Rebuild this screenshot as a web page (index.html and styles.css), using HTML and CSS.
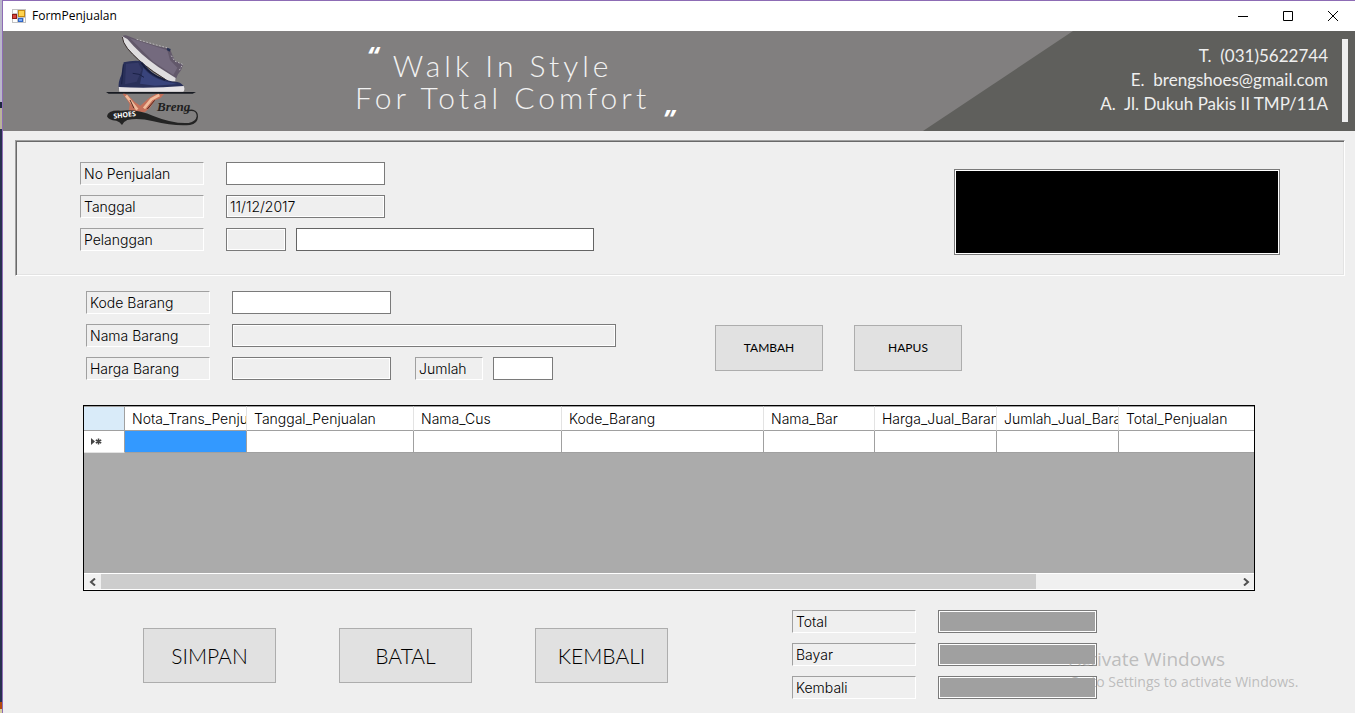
FILE: index.html
```html
<!DOCTYPE html>
<html lang="id">
<head>
<meta charset="utf-8">
<title>FormPenjualan</title>
<link rel="stylesheet" href="styles.css">
</head>
<body>
<div class="desktop-edge"></div>
<div class="window">
  <header class="titlebar">
    <svg class="app-icon" viewBox="0 0 14 14" aria-hidden="true">
      <rect width="14" height="14" fill="#c3c3c3"/>
      <path d="M1 1h4v3H1zM1 10h4v3H1zM12 9h1v4h-1z" fill="#fff"/>
      <rect x="0" y="5" width="5" height="5" fill="#8e1b17"/><rect x="1" y="6" width="3" height="3" fill="#d8453c"/>
      <rect x="6" y="1" width="7" height="7" fill="#c48a12"/><rect x="7" y="2" width="5" height="5" fill="#ffd44f"/>
      <rect x="6" y="9" width="5" height="4" fill="#2f66c6"/><rect x="7" y="10" width="3" height="2" fill="#78a9f7"/>
    </svg>
    <span class="title">FormPenjualan</span>
    <button class="win-btn" aria-label="Minimize"><svg viewBox="0 0 10 10"><path d="M0 5.5h10"/></svg></button>
    <button class="win-btn" aria-label="Maximize"><svg viewBox="0 0 10 10"><path d="M.5 .5h9v9h-9z"/></svg></button>
    <button class="win-btn" aria-label="Close"><svg viewBox="0 0 10 10"><path d="M0 0l10 10M10 0L0 10"/></svg></button>
  </header>

  <section class="banner">
    <svg class="logo" viewBox="45 20 285 276" role="img" aria-label="Breng Shoes">
      <path d="M97 24Q104 18 116 24L150 37L200 53L240 61L246 78L254 96L279 110L273 126L263 139L256 158L236 158L160 105Z" fill="#62586a"/>
      <path d="M120 30L232 66L240 95L262 118L250 140L190 100Z" fill="#746a7e"/>
      <path d="M140 33L200 50L238 60M244 82L254 98L278 108L268 126" fill="none" stroke="#b9b5bb" stroke-width="3" stroke-dasharray="5 5"/>
      <path d="M232 58l10 4l-3 8l-9-5z" fill="#263052"/>
      <path d="M97 24Q98 40 112 58Q140 92 190 128L238 160L256 159L257 149L205 116Q150 78 112 32Z" fill="#dfdddf"/>
      <path d="M97 26Q98 42 112 60Q140 94 190 130L238 161" fill="none" stroke="#3a3030" stroke-width="3"/>
      <path d="M101 102Q125 96 150 98Q157 101 164 109Q185 137 214 149Q232 158 262 161Q279 165 283 179L86 181Q84 160 94 140Z" fill="#29305a"/>
      <path d="M108 106L145 103L155 125L140 160L105 168Z" fill="#353a68"/>
      <path d="M160 118Q180 145 222 158L262 167L195 172L150 166Z" fill="#39447c"/>
      <path d="M154 103Q174 137 225 155" fill="none" stroke="#151b3b" stroke-width="5"/>
      <path d="M128 135q22 0 34 12M100 108l-5 60" fill="none" stroke="#1a2146" stroke-width="3"/>
      <path d="M86 176Q180 181 281 173Q286 183 280 190L88 190Z" fill="#e6e3e6"/>
      <path d="M48 191L318 191L308 196L56 196Z" fill="#181b22"/>
      <path d="M98 197Q107 195 116 202L135 222L151 232L178 208L198 197L222 197L212 209L195 216L180 238L164 252H116L119 228Q112 213 98 197Z" fill="#c4705a"/>
      <path d="M108 202L126 224L142 244M208 200L184 213L162 240" fill="none" stroke="#f2bc9c" stroke-width="8"/>
      <path d="M120 215L132 240M194 216L172 242" fill="none" stroke="#51251d" stroke-width="3"/>
      <path d="M51 264Q53 245 92 247Q145 242 190 263Q250 287 296 284Q318 279 320 264Q320 248 304 248Q287 249 278 250Q296 242 309 244Q325 248 324 265Q323 286 300 290Q252 294 190 279Q145 268 112 275Q101 279 96 290Q89 279 79 277Q55 276 51 264Z" fill="#242424"/>
      <text class="logo-script" x="201" y="248">Breng</text>
      <text class="logo-shoes" x="71" y="271" transform="rotate(-7 71 271)">SHOES</text>
    </svg>
    <div class="slogan">
      <span class="quote quote-open">“</span>
      <p>Walk In Style<br>For Total Comfort</p>
      <span class="quote quote-close">”</span>
    </div>
    <address class="contact">
      <div class="contact-lines">
        <span>T.&nbsp; (031)5622744</span>
        <span>E.&nbsp; brengshoes@gmail.com</span>
        <span>A.&nbsp; Jl. Dukuh Pakis II TMP/11A</span>
      </div>
      <div class="contact-bar"></div>
    </address>
  </section>

  <main>
    <section class="sale-panel">
      <div class="fields">
        <div class="row"><label class="tag" for="no">No Penjualan</label><input id="no" class="w-md" type="text"></div>
        <div class="row"><label class="tag" for="tgl">Tanggal</label><input id="tgl" class="w-md" type="text" value="11/12/2017" readonly></div>
        <div class="row"><label class="tag" for="plg">Pelanggan</label><span class="pair"><input id="plg" class="w-sm" type="text" readonly><input class="w-lg" type="text" aria-label="Nama pelanggan"></span></div>
      </div>
      <textarea class="display" aria-label="Total belanja" readonly></textarea>
    </section>

    <section class="item-entry">
      <div class="fields">
        <div class="row"><label class="tag" for="kode">Kode Barang</label><input id="kode" class="w-md" type="text"></div>
        <div class="row"><label class="tag" for="nama">Nama Barang</label><input id="nama" class="w-xl" type="text" readonly></div>
        <div class="row"><label class="tag" for="harga">Harga Barang</label><input id="harga" class="w-md" type="text" readonly>
          <span class="pair qty"><label class="tag tag-sm" for="jumlah">Jumlah</label><input id="jumlah" class="w-sm" type="text"></span></div>
      </div>
      <div class="item-actions">
        <button class="btn">TAMBAH</button>
        <button class="btn">HAPUS</button>
      </div>
    </section>

    <section class="grid-view">
      <table>
        <colgroup><col class="c-head"><col class="c-nota"><col class="c-tanggal"><col class="c-cus"><col class="c-kode"><col class="c-bar"><col class="c-nota"><col class="c-nota"><col></colgroup>
        <thead>
          <tr><th class="corner"></th><th>Nota_Trans_Penjualan</th><th>Tanggal_Penjualan</th><th>Nama_Cus</th><th>Kode_Barang</th><th>Nama_Bar</th><th>Harga_Jual_Barang</th><th>Jumlah_Jual_Barang</th><th>Total_Penjualan</th></tr>
        </thead>
        <tbody>
          <tr><td class="marker"><svg viewBox="0 0 12 9" aria-hidden="true"><path d="M1 1v7l4-3.500z" fill="#444"/><path d="M8.500 1.500v6M5.800 3l5.400 3M11.200 3L5.800 6" stroke="#444" stroke-width="1.500"/></svg></td><td class="selected"></td><td></td><td></td><td></td><td></td><td></td><td></td><td></td></tr>
        </tbody>
      </table>
      <div class="scrollbar">
        <button class="scroll-btn" aria-label="Scroll left"><svg viewBox="0 0 8 8"><path d="M6 .5L2 4l4 3.500"/></svg></button>
        <div class="track"><div class="thumb"></div></div>
        <button class="scroll-btn" aria-label="Scroll right"><svg viewBox="0 0 8 8"><path d="M2 .5L6 4L2 7.500"/></svg></button>
      </div>
    </section>

    <section class="footer">
      <div class="main-actions">
        <button class="btn btn-lg">SIMPAN</button>
        <button class="btn btn-lg">BATAL</button>
        <button class="btn btn-lg">KEMBALI</button>
      </div>
      <div class="fields">
        <div class="row"><label class="tag" for="total">Total</label><input id="total" class="w-md sum" type="text" readonly></div>
        <div class="row"><label class="tag" for="bayar">Bayar</label><input id="bayar" class="w-md sum" type="text"></div>
        <div class="row"><label class="tag" for="kembali">Kembali</label><input id="kembali" class="w-md sum" type="text" readonly></div>
      </div>
    </section>
  </main>
  <aside class="watermark"><strong>Activate Windows</strong><span>Go to Settings to activate Windows.</span></aside>
</div>
</body>
</html>
```
FILE: styles.css
```css
* { box-sizing: border-box; }

body {
  display: flex;
  min-height: 100vh;
  margin: 0;
  background: #efefef;
  color: #000;
  font: 300 14px/21px Inter, "Open Sans", sans-serif;
}

button, input, textarea { margin: 0; padding: 0; border-radius: 0; font: inherit; color: inherit; }
svg { display: block; }

.desktop-edge {
  flex: none;
  width: 2px;
  background: linear-gradient(#b9b7c9 0 102px, #1f2940 102px 108px, #b9b49a 108px 129px, #27304f 129px 702px, #b5490c 702px 709px, #d8cfa0 709px);
}

.window {
  position: relative;
  flex: 1;
  min-width: 0;
  border-top: 1px solid #8d6cb5;
  border-left: 1px solid #8d6cb5;
}

/* Title bar */
.titlebar { display: flex; align-items: center; height: 30px; padding-left: 9px; background: #fff; }
.app-icon { width: 14px; height: 14px; }
.title { flex: 1; padding-left: 6px; font: 400 12px/20px "Open Sans", sans-serif; }
.win-btn { display: grid; place-items: center; width: 45px; height: 30px; border: 0; background: none; }
.win-btn svg { width: 10px; height: 10px; fill: none; stroke: #000; overflow: visible; }

/* Banner */
.banner { display: flex; height: 100px; padding-left: 102px; background: #817f7f; }
.logo { flex: none; width: 95px; height: 92px; margin-top: 4px; }
.logo-script { font: italic bold 39px "Liberation Serif", serif; fill: #202020; }
.logo-shoes { font: bold 21px "Open Sans", sans-serif; fill: #fff; }
.slogan { position: relative; margin-left: 155px; padding-top: 18px; color: #f2f2f2; }
.slogan p { margin: 0; font: 300 30px/32px Lato, sans-serif; letter-spacing: 4px; text-align: center; white-space: nowrap; }
.quote { position: absolute; font: italic bold 26px/26px "Open Sans", sans-serif; color: #fff; }
.quote-open { top: 12px; left: 12px; }
.quote-close { right: -24px; bottom: -1px; }
.contact {
  display: flex;
  justify-content: flex-end;
  gap: 14px;
  width: 432px;
  margin-left: auto;
  padding: 8px 7px 9px 0;
  background: #5f5f5c;
  clip-path: polygon(150px 0, 100% 0, 100% 100%, 0 100%);
  color: #efefef;
  font: normal 17px/24px Lato, sans-serif;
  text-align: right;
  white-space: nowrap;
}
.contact-lines { display: flex; flex-direction: column; padding-top: 5px; }
.contact-bar { width: 6px; background: #efefef; }

/* Shared form parts */
.fields { display: flex; flex-direction: column; gap: 10px; }
.row { display: flex; gap: 22px; }
.pair { display: flex; gap: 10px; }
.tag {
  width: 124px;
  height: 23px;
  padding-left: 3px;
  border: 1px solid;
  border-color: #a0a0a0 #fff #fff #a0a0a0;
}
.tag-sm { width: 68px; }
.qty { margin-left: 2px; }
input, textarea { height: 23px; border: 1px solid #7a7a7a; background: #fff; box-shadow: inset 0 0 0 1px #fff; }
input { padding-left: 3px; }
input:read-only { background: #efefef; }
input.sum { background: #a0a0a0; }
.w-sm { width: 60px; }
.w-md { width: 159px; }
.w-lg { width: 298px; border-color: #646464; }
.w-xl { width: 384px; }

.btn { width: 108px; height: 46px; border: 1px solid #adadad; background: #e1e1e1; font: 400 12px/20px Lato, sans-serif; }
.btn-lg { width: 133px; height: 55px; font-size: 21px; font-weight: 300; }

/* Sale header */
.sale-panel {
  display: flex;
  justify-content: space-between;
  margin: 9px 10px 0 12px;
  padding: 21px 64px 20px;
  border: 1px solid;
  border-color: #a0a0a0 #fff #fff #a0a0a0;
  box-shadow: inset 1px 1px #696969, inset -1px -1px #e3e3e3;
}
.display { width: 326px; height: 86px; margin-top: 7px; background: #000; resize: none; }

/* Item entry */
.item-entry { display: flex; gap: 99px; padding: 15px 0 0 83px; }
.item-actions { display: flex; gap: 31px; padding-top: 34px; }

/* Data grid */
.grid-view {
  display: flex;
  flex-direction: column;
  height: 186px;
  margin: 25px 100px 0 80px;
  border: 1px solid #000;
  background: #ababab;
}
table { width: 100%; table-layout: fixed; border-collapse: separate; border-spacing: 0; }
.c-head { width: 41px; }
.c-nota { width: 122px; }
.c-tanggal { width: 167px; }
.c-cus { width: 148px; }
.c-kode { width: 202px; }
.c-bar { width: 111px; }
th {
  height: 25px;
  padding: 0 0 0 7px;
  overflow: hidden;
  border: solid;
  border-width: 1px 1px 1px 0;
  border-color: #a0a0a0 #e3e3e3 #a0a0a0;
  background: #fff;
  font-weight: 300;
  text-align: left;
  white-space: nowrap;
}
td { height: 22px; padding: 0; border: solid #a0a0a0; border-width: 0 1px 1px 0; background: #fff; }
th:last-child, td:last-child { border-right: 0; }
.corner { border-right-color: #a0a0a0; background: #d9ebf9; }
.marker { padding-left: 6px; border-bottom-color: #e3e3e3; }
.marker svg { width: 12px; height: 9px; }
.selected { background: #3399ff; }
.scrollbar { display: flex; height: 17px; margin-top: auto; background: #f0f0f0; border: solid #fff; border-width: 1px 0; }
.scroll-btn { display: grid; place-items: center; width: 17px; border: 0; background: none; }
.scroll-btn svg { width: 8px; height: 8px; fill: none; stroke: #505050; stroke-width: 2px; }
.track { flex: 1; }
.thumb { width: 82.3%; height: 100%; background: #cdcdcd; }

/* Footer */
.footer { display: flex; gap: 124px; padding: 19px 0 14px 140px; }
.main-actions { display: flex; gap: 63px; padding-top: 18px; }

.watermark {
  position: absolute;
  right: 51px;
  bottom: 21px;
  display: flex;
  flex-direction: column;
  width: 235px;
  color: rgba(160, 160, 160, .65);
  font: 400 14px/20px "Open Sans", sans-serif;
  white-space: nowrap;
  pointer-events: none;
}
.watermark strong { font-size: 19px; font-weight: 400; line-height: 26px; }
```
